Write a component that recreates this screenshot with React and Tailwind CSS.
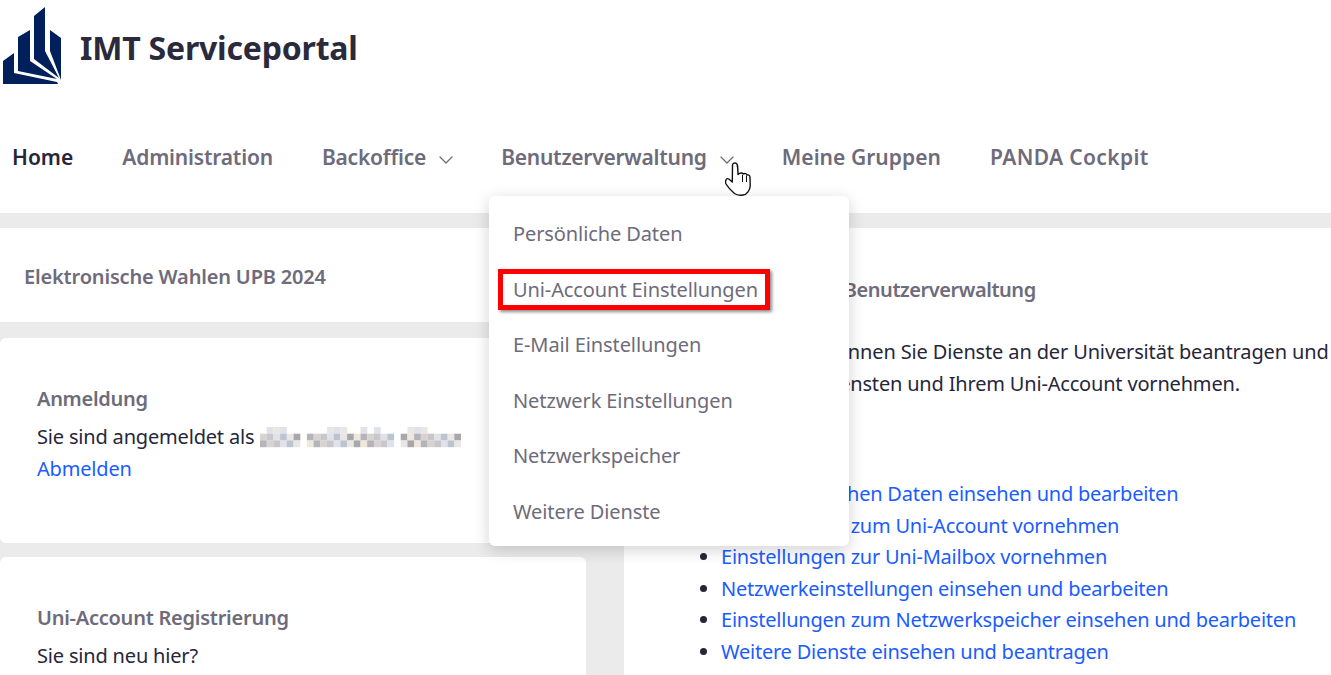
import React from 'react';
import { ChevronDown } from 'lucide-react';

const FONT = "font-['Noto_Sans',sans-serif]";

const DROPDOWN = ['Persönliche Daten', 'Uni-Account Einstellungen', 'E-Mail Einstellungen', 'Netzwerk Einstellungen', 'Netzwerkspeicher', 'Weitere Dienste'];
const LINKS = [
  'Ihre persönlichen Daten einsehen und bearbeiten',
  'Einstellungen zum Uni-Account vornehmen',
  'Einstellungen zur Uni-Mailbox vornehmen',
  'Netzwerkeinstellungen einsehen und bearbeiten',
  'Einstellungen zum Netzwerkspeicher einsehen und bearbeiten',
  'Weitere Dienste einsehen und beantragen',
];

// pixelated name in the reference
const MOSAIC_COLORS = ['#c9c7cb', '#e9e6e4', '#b5b4ba', '#dfe2e8', '#aaa7ac', '#d8d3d2', '#bcc4d0', '#efe6dc'];
const MOSAIC_TOP = [1, 2, 3, 22, 23, 24, 11, 12, 15, 17, 10];

function Logo() {
  return (
    <svg width="64" height="86" viewBox="0 0 64 86" className="shrink-0">
      <polygon fill="#00205c" points="3,60 14,52 14,72 57,81 58,83 3,83" />
      <polygon fill="#00205c" points="18,36 30,29 30,60 57,78 18,70" />
      <polygon fill="#00205c" points="34,15 45,6 45,50 59,77 34,58" />
      <polygon fill="#00205c" points="50,29 61,37 61,79 50,50" />
    </svg>
  );
}

function Mosaic() {
  const cells = [];
  for (let x = 0; x < 30; x++) {
    if (x === 6 || x === 20) continue;
    if (MOSAIC_TOP.includes(x)) {
      cells.push(<rect key={x + '-t'} x={x * 6.7} y="0" width="6.8" height="6.8" fill={MOSAIC_COLORS[1 + (x % 2) * 2]} />);
    }
    for (let y = 1; y < 3; y++) {
      cells.push(<rect key={x + '-' + y} x={x * 6.7} y={y * 6.7} width="6.8" height="6.8" fill={MOSAIC_COLORS[(x * 3 + y * 5) % 8]} />);
    }
  }
  return (
    <svg width="201" height="21" className="inline-block align-[-4px] ml-[6px]">{cells}</svg>
  );
}

function NavItem({ label, active, chevron, className }) {
  return (
    <a className={`flex items-center text-[21px] font-semibold ${className} ${active ? 'text-[#26263a]' : 'text-[#6e6b7b]'}`}>
      {label}
      {chevron && <ChevronDown size={24} strokeWidth={1.25} className="ml-[8px] -mr-[6px] mt-[4px] text-[#6e6b7b]" />}
    </a>
  );
}

function Hand() {
  return (
    <svg width="28" height="38" viewBox="0 0 28 38" className="absolute left-[725px] top-[160px]">
      <path
        d="M7.5 5C7.5 3 10 2.5 11.5 3.5C12.7 4.5 12.8 6 13 14.5C15 12.5 17.5 12.8 18.3 14C20 13 21.5 13.5 22 15C23.8 14.5 25 15.5 25 17.5L25.2 26C25 30 22 34.5 18 35C15 35.4 11.5 35 9.5 33.5C6 30.5 2.5 26.5 1 24C0 22 0.8 18.6 2.5 18.6C4 18.6 5.5 20.5 7.3 22Z"
        fill="#fff" stroke="#111" strokeWidth="1.4" strokeLinejoin="round"
      />
      <path d="M17.5 15V22M21.5 15.5V22" stroke="#111" strokeWidth="1" fill="none" />
    </svg>
  );
}

export default function App() {
  return (
    <div className={`${FONT} relative h-[675px] overflow-hidden bg-white text-[20px] leading-[31.5px] text-[#26263a] tracking-[-0.18px]`}>
      <header className="h-[213px]">
        <div className="flex h-[97px] items-start pt-[1px]">
          <Logo />
          <h1 className="ml-[16px] mt-[27px] text-[32px] leading-[40px] font-bold tracking-[-0.2px] text-[#2a2a3c]">IMT Serviceportal</h1>
        </div>
        <nav className="flex gap-[49px] pl-[12px] pt-[45px]">
          <NavItem label="Home" active className="tracking-normal" />
          <NavItem label="Administration" className="tracking-[-0.2px]" />
          <NavItem label="Backoffice" chevron className="tracking-[-0.2px]" />
          <NavItem label="Benutzerverwaltung" chevron className="tracking-[-0.25px]" />
          <NavItem label="Meine Gruppen" className="tracking-[0.05px]" />
          <NavItem label="PANDA Cockpit" className="tracking-[0.35px]" />
        </nav>
      </header>

      <main className="grid grid-cols-[586px_1fr] gap-x-[38px] bg-[#ebebeb] pt-[15px]">
        <div className="flex flex-col">
          <div className="flex h-[94px] items-center bg-white pl-[24px] pt-[4px] font-semibold tracking-[-0.17px] text-[#6e6b7b]">Elektronische Wahlen UPB 2024</div>
          <section className="mt-[16px] h-[205px] rounded-[6px] bg-white pl-[37px] pt-[45px]">
            <h2 className="font-semibold tracking-[-0.3px] text-[#6e6b7b]">Anmeldung</h2>
            <p className="mt-[6px] whitespace-nowrap">Sie sind angemeldet als<Mosaic /></p>
            <a className="mt-[1px] block text-[#1a5cff]">Abmelden</a>
          </section>
          <section className="mt-[14px] h-[200px] rounded-[6px] bg-white pl-[37px] pt-[45px]">
            <h2 className="font-semibold tracking-[-0.25px] text-[#6e6b7b]">Uni-Account Registrierung</h2>
            <p className="mt-[6px]">Sie sind neu hier?</p>
          </section>
        </div>

        <div className="whitespace-nowrap bg-white pl-[36px] pt-[46px]">
          <h2 className="ml-[2px] font-semibold tracking-[-0.45px] text-[#6e6b7b]">Willkommen in der Benutzerverwaltung</h2>
          <p className="mt-[30.75px] tracking-[-0.14px]">Auf diesen Seiten können Sie Dienste an der Universität beantragen und</p>
          <p>Anpassungen an Diensten und Ihrem Uni-Account vornehmen.</p>
          <ul className="mt-[78.75px] list-disc pl-[61px] tracking-[-0.23px] marker:text-[#26263a]">
            {LINKS.map((l) => (
              <li key={l}><a className="text-[#1a5cff]">{l}</a></li>
            ))}
          </ul>
        </div>
      </main>

      <div className="absolute left-[489px] top-[196px] h-[350px] w-[360px] rounded-[6px] bg-white py-[10px] pl-[24px] tracking-[-0.1px] text-[#6e6b7b] shadow-[0_4px_16px_rgba(0,0,0,0.18)]">
        {DROPDOWN.map((d) => (
          <div key={d} className="flex h-[55.6px] items-center">{d}</div>
        ))}
      </div>
      <div className="absolute left-[498px] top-[269px] h-[41px] w-[272px] border-[5px] border-[#ff0000] shadow-[2px_2px_3px_rgba(0,0,0,0.45)]" />
      <Hand />
    </div>
  );
}
